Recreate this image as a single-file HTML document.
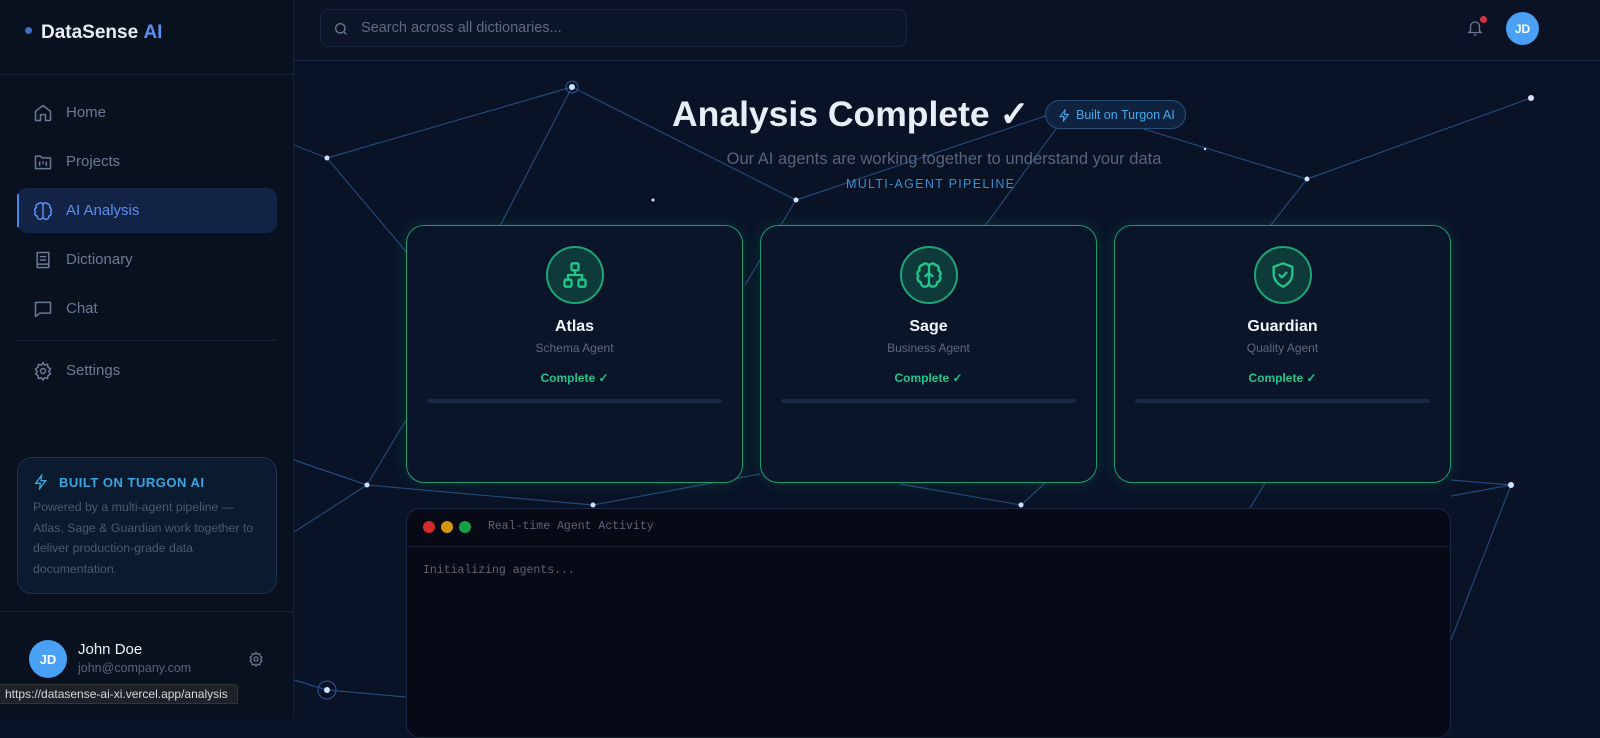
<!DOCTYPE html>
<html><head><meta charset="utf-8"><style>
*{box-sizing:border-box;margin:0;padding:0}
body{width:1600px;height:718px;overflow:hidden;background:#0a1226;font-family:"Liberation Sans",sans-serif;position:relative}
.side{position:absolute;left:0;top:0;width:294px;height:718px;background:#09111f;border-right:1px solid #16223a}
.logo{position:absolute;left:25px;top:22px;font-size:19px;font-weight:bold;color:#e8edf8}
.logo i{display:inline-block;width:7px;height:7px;border-radius:50%;background:#3f6fc4;margin-right:9px;vertical-align:middle;position:relative;top:-2px}
.logo b{color:#5b8ff0}
.hr{position:absolute;left:0;width:293px;height:1px;background:#16223a}
.nav{position:absolute;left:17px;width:260px;height:45px;display:flex;align-items:center;padding-left:16px;color:#6b7a94;font-size:15px}
.nav svg{width:20px;height:20px;margin-right:13px;fill:none;stroke:#6b7a94;stroke-width:1.8;stroke-linecap:round;stroke-linejoin:round}
.nav.act{background:#132346;color:#5b8ff0;border-radius:10px}
.nav.act svg{stroke:#5b8ff0}
.nav.act:before{content:"";position:absolute;left:0;top:6px;width:2px;height:33px;background:#4f86ee}
.box{position:absolute;left:17px;top:457px;width:260px;height:137px;border:1px solid #1d3150;border-radius:15px;background:#0c1a30;padding:16px 15px}
.box h4{color:#38a6e0;font-size:13px;letter-spacing:.5px;display:flex;align-items:center;gap:10px}
.box p{color:#4c5970;font-size:12.3px;line-height:20.5px;margin-top:7px}
.av{position:absolute;border-radius:50%;background:#4aa0f5;color:#fff;font-weight:bold;display:flex;align-items:center;justify-content:center}
.top{position:absolute;left:294px;top:0;right:0;height:61px;border-bottom:1px solid #18284a;background:#0a1224}
.search{position:absolute;left:320px;top:9px;width:587px;height:38px;border:1px solid #19253c;border-radius:9px;background:#0c1528;color:#5f6b80;font-size:14.5px;padding:10px 0 0 40px}
.card{position:absolute;top:225px;width:337px;height:258px;border:1px solid #1f9a6a;border-radius:18px;background:#0b1529;box-shadow:0 0 16px rgba(16,185,129,.2);text-align:center}
.ic{width:58px;height:58px;border:2px solid #1fa477;border-radius:50%;background:#0f3a3a;margin:20px auto 0;display:flex;align-items:center;justify-content:center}
.ic svg{width:28px;height:28px;fill:none;stroke:#22c58a;stroke-width:2;stroke-linecap:round;stroke-linejoin:round}
.card h3{color:#f2f5fb;font-size:16px;margin-top:14px}
.card .s{color:#5c6880;font-size:12px;margin-top:5px}
.card .c{color:#1ec48a;font-size:12px;font-weight:bold;margin-top:16px}
.card .bar{width:295px;height:4px;background:#1a2745;margin:14px auto 0;border-radius:2px}
.term{position:absolute;left:406px;top:508px;width:1045px;height:230px;background:#070a15;border:1px solid #1a2640;border-radius:14px}
.mono{font-family:"Liberation Mono",monospace;font-size:11.5px;color:#5a6478}
</style></head><body>
<svg style="position:absolute;left:0;top:0" width="1600" height="718">
<g stroke="#2a5a96" stroke-width="1.2" opacity=".75">
<line x1="294" y1="145" x2="327" y2="158"/><line x1="327" y1="158" x2="572" y2="87"/><line x1="572" y1="87" x2="796" y2="200"/>
<line x1="327" y1="158" x2="430" y2="280"/><line x1="572" y1="87" x2="500" y2="226"/><line x1="796" y1="200" x2="1072" y2="107"/>
<line x1="1072" y1="107" x2="1307" y2="179"/><line x1="1307" y1="179" x2="1531" y2="98"/><line x1="796" y1="200" x2="745" y2="285"/>
<line x1="1307" y1="179" x2="1270" y2="226"/><line x1="1072" y1="107" x2="985" y2="226"/><line x1="294" y1="460" x2="367" y2="485"/>
<line x1="367" y1="485" x2="593" y2="505"/><line x1="294" y1="532" x2="367" y2="485"/><line x1="367" y1="485" x2="406" y2="420"/>
<line x1="593" y1="505" x2="760" y2="474"/><line x1="1021" y1="505" x2="1045" y2="483"/><line x1="1021" y1="505" x2="900" y2="484"/>
<line x1="1511" y1="485" x2="1451" y2="496"/><line x1="1511" y1="485" x2="1451" y2="640"/><line x1="1451" y1="480" x2="1511" y2="485"/>
<line x1="294" y1="680" x2="327" y2="690"/><line x1="327" y1="690" x2="406" y2="697"/><line x1="1265" y1="483" x2="1250" y2="508"/>
</g>
<g fill="#cfe2ff"><circle cx="572" cy="87" r="3"/><circle cx="327" cy="158" r="2.5"/><circle cx="796" cy="200" r="2.5"/><circle cx="1072" cy="107" r="3"/><circle cx="1307" cy="179" r="2.5"/><circle cx="1531" cy="98" r="3"/><circle cx="367" cy="485" r="2.5"/><circle cx="593" cy="505" r="2.5"/><circle cx="1021" cy="505" r="2.5"/><circle cx="1511" cy="485" r="3"/><circle cx="327" cy="690" r="3"/><circle cx="653" cy="200" r="1.5"/><circle cx="1205" cy="149" r="1.2"/></g>
<circle cx="327" cy="690" r="9" fill="none" stroke="#2a5a96"/><circle cx="572" cy="87" r="6" fill="none" stroke="#2a5a96"/>
</svg>
<div class="side">
<div class="logo"><i></i>DataSense <b>AI</b></div>
<div class="hr" style="top:74px"></div>
<div class="nav" style="top:90px"><svg viewBox="0 0 24 24"><path d="M3 10l9-7 9 7v10a1 1 0 01-1 1h-5v-7h-6v7H4a1 1 0 01-1-1z"/></svg>Home</div>
<div class="nav" style="top:139px"><svg viewBox="0 0 24 24"><path d="M3 5h6l2 2h10v13H3z"/><path d="M8 12v4M12 12v2M16 12v4"/></svg>Projects</div>
<div class="nav act" style="top:188px"><svg viewBox="0 0 24 24"><path d="M12 5a3 3 0 00-5.5-1.5A3 3 0 004 8a3 3 0 00-1 5 3 3 0 002 5 3 3 0 007 1zM12 5a3 3 0 015.5-1.5A3 3 0 0120 8a3 3 0 011 5 3 3 0 01-2 5 3 3 0 01-7 1zM12 5v14"/></svg>AI Analysis</div>
<div class="nav" style="top:237px"><svg viewBox="0 0 24 24"><path d="M5 3h14v18H5zM9 8h6M9 12h6M5 17h14"/></svg>Dictionary</div>
<div class="nav" style="top:286px"><svg viewBox="0 0 24 24"><path d="M3 4h18v13H8l-5 4z"/></svg>Chat</div>
<div class="hr" style="top:340px;left:17px;width:260px"></div>
<div class="nav" style="top:348px"><svg viewBox="0 0 24 24"><circle cx="12" cy="12" r="3"/><path d="M12 2l2 3 3.5-1 .5 3.5 3 2-2 3 2 3-3 2-.5 3.5-3.5-1-2 3-2-3-3.5 1-.5-3.5-3-2 2-3-2-3 3-2 .5-3.5 3.5 1z"/></svg>Settings</div>
<div class="box"><h4><svg width="16" height="16" viewBox="0 0 24 24" fill="none" stroke="#38a6e0" stroke-width="2"><path d="M13 2L4 14h7l-1 8 9-12h-7z"/></svg>BUILT ON TURGON AI</h4>
<p>Powered by a multi-agent pipeline —<br>Atlas, Sage &amp; Guardian work together to<br>deliver production-grade data<br>documentation.</p></div>
<div class="hr" style="top:611px"></div>
<div class="av" style="left:29px;top:640px;width:38px;height:38px;font-size:13px">JD</div>
<div style="position:absolute;left:78px;top:641px;color:#eef2fa;font-size:15px">John Doe</div>
<div style="position:absolute;left:78px;top:661px;color:#56647c;font-size:12.5px">john@company.com</div>
<svg style="position:absolute;left:248px;top:651px" width="16" height="16" viewBox="0 0 24 24" fill="none" stroke="#6b7a94" stroke-width="1.8"><circle cx="12" cy="12" r="3"/><path d="M12 2l2 3 3.5-1 .5 3.5 3 2-2 3 2 3-3 2-.5 3.5-3.5-1-2 3-2-3-3.5 1-.5-3.5-3-2 2-3-2-3 3-2 .5-3.5 3.5 1z"/></svg>
</div>
<div class="top"></div>
<div class="search"><svg style="position:absolute;left:12px;top:11px" width="16" height="16" viewBox="0 0 24 24" fill="none" stroke="#6b7a94" stroke-width="2"><circle cx="11" cy="11" r="7"/><path d="M20 20l-4-4"/></svg>Search across all dictionaries...</div>
<svg style="position:absolute;left:1466px;top:18px" width="18" height="20" viewBox="0 0 24 24" fill="none" stroke="#6b7a94" stroke-width="1.8"><path d="M6 16V10a6 6 0 0112 0v6l2 2H4zM10 21h4"/></svg>
<div style="position:absolute;left:1480px;top:16px;width:7px;height:7px;border-radius:50%;background:#d0334a"></div>
<div class="av" style="left:1506px;top:12px;width:33px;height:33px;font-size:12px">JD</div>
<div style="position:absolute;left:672px;top:94px;font-size:35.5px;font-weight:bold;color:#e8edf8;white-space:nowrap">Analysis Complete ✓</div>
<div style="position:absolute;left:1045px;top:100px;width:141px;height:29px;border:1px solid #24507a;border-radius:15px;background:#0f2340;color:#4aa8e8;font-size:12.5px;padding:7px 0 0 30px"><svg style="position:absolute;left:12px;top:8px" width="13" height="13" viewBox="0 0 24 24" fill="none" stroke="#4aa8e8" stroke-width="2"><path d="M13 2L4 14h7l-1 8 9-12h-7z"/></svg>Built on Turgon AI</div>
<div style="position:absolute;left:0;width:1600px;padding-left:294px;top:150px;text-align:center;color:#56647c;font-size:16.5px;"><span style="position:relative;left:-3px">Our AI agents are working together to understand your data</span></div>
<div style="position:absolute;left:846px;top:177px;color:#3a8fd0;font-size:12.5px;letter-spacing:1.3px">MULTI-AGENT PIPELINE</div>
<div class="card" style="left:406px"><div class="ic"><svg viewBox="0 0 24 24"><rect x="9" y="2" width="6" height="6" rx="1"/><rect x="3" y="16" width="6" height="6" rx="1"/><rect x="15" y="16" width="6" height="6" rx="1"/><path d="M12 8v4M6 16v-4h12v4"/></svg></div><h3>Atlas</h3><div class="s">Schema Agent</div><div class="c">Complete ✓</div><div class="bar"></div></div>
<div class="card" style="left:760px"><div class="ic"><svg viewBox="0 0 24 24"><path d="M12 5a3 3 0 00-5.5-1.5A3 3 0 004 8a3 3 0 00-1 5 3 3 0 002 5 3 3 0 007 1zM12 5a3 3 0 015.5-1.5A3 3 0 0120 8a3 3 0 011 5 3 3 0 01-2 5 3 3 0 01-7 1zM12 5v14M9 13l3-3 3 3"/></svg></div><h3>Sage</h3><div class="s">Business Agent</div><div class="c">Complete ✓</div><div class="bar"></div></div>
<div class="card" style="left:1114px"><div class="ic"><svg viewBox="0 0 24 24"><path d="M12 2l8 3v6c0 5-3.5 9-8 11-4.5-2-8-6-8-11V5z"/><path d="M9 12l2 2 4-4"/></svg></div><h3>Guardian</h3><div class="s">Quality Agent</div><div class="c">Complete ✓</div><div class="bar"></div></div>
<div class="term">
<div style="position:absolute;left:16px;top:12px;display:flex;gap:6px"><i style="width:12px;height:12px;border-radius:50%;background:#d12b2b"></i><i style="width:12px;height:12px;border-radius:50%;background:#d3960f"></i><i style="width:12px;height:12px;border-radius:50%;background:#14a046"></i></div>
<div class="mono" style="position:absolute;left:81px;top:11px">Real-time Agent Activity</div>
<div style="position:absolute;left:0;right:0;top:37px;height:1px;background:#161f33"></div>
<div class="mono" style="position:absolute;left:16px;top:55px">Initializing agents...</div>
</div>
<div style="position:absolute;left:0;top:684px;height:20px;width:238px;background:#1e2127;border:1px solid #333;border-left:none;border-radius:0 4px 0 0;color:#d8d8d8;font-size:12px;padding:2px 0 0 5px">https://datasense-ai-xi.vercel.app/analysis</div>
</body></html>
